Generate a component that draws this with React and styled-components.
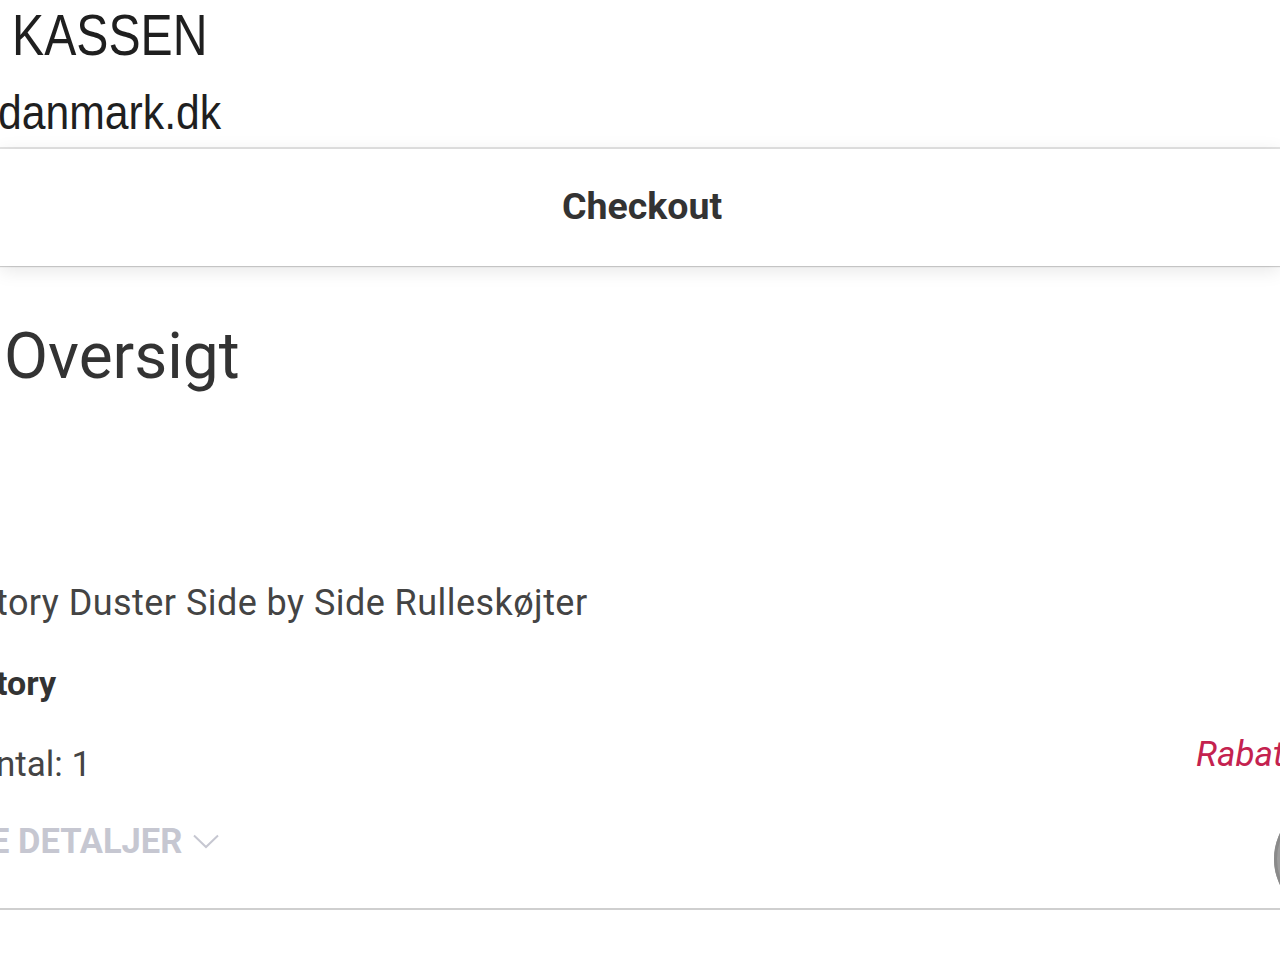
import React from "react";
import styled, { createGlobalStyle } from "styled-components";

const Global = createGlobalStyle`
  html, body { margin: 0; padding: 0; background: #fff; }
  body { overflow: hidden; width: 1280px; height: 960px; }
  #root { width: 1280px; min-height: 960px; overflow: hidden; }
`;

const Page = styled.div`
  display: flex;
  flex-direction: column;
  width: 1280px;
  overflow: hidden;
  font-family: Roboto, "Noto Sans", sans-serif;
`;

const TopBar = styled.div`
  display: flex;
  flex-direction: column;
  padding: 1px 0 6px 12px;
  border-bottom: 2px solid #e3e3e3;
  font-family: "Liberation Sans", Arial, sans-serif;
  color: #1f1f1f;
`;

const StoreTitle = styled.div`
  font-size: 57px;
  line-height: 68px;
  transform: scaleX(0.845);
  transform-origin: left center;
  white-space: nowrap;
`;

const StoreDomain = styled.div`
  margin: 16px 0 0 -14px;
  font-size: 48px;
  line-height: 56px;
  transform: scaleX(0.89);
  transform-origin: left center;
  white-space: nowrap;
`;

const Header = styled.header`
  position: relative;
  z-index: 1;
  height: 117px;
  display: flex;
  align-items: center;
  justify-content: center;
  padding-bottom: 4px;
  box-sizing: border-box;
  background: #fff;
  box-shadow: 0 1px 1px rgba(0, 0, 0, 0.18), 0 4px 18px rgba(0, 0, 0, 0.1);
`;

const HeaderTitle = styled.h1`
  margin: 0 0 0 4px;
  font-size: 37.5px;
  font-weight: 700;
  color: #333;
  line-height: 42px;
`;

const Overview = styled.section`
  display: flex;
  flex-direction: column;
  padding: 53px 0 0 4px;
`;

const OverviewTitle = styled.h2`
  margin: 0;
  font-size: 64px;
  font-weight: 400;
  line-height: 76px;
  color: #333;
`;

const ItemRow = styled.div`
  display: flex;
  justify-content: space-between;
  align-items: flex-start;
  margin: 188px -112px 0 -4px;
  padding-bottom: 47px;
  border-bottom: 2px solid #cfcfcf;
`;

const ItemInfo = styled.div`
  display: flex;
  flex-direction: column;
  margin-left: -4px;
`;

const ItemLine = styled.div`
  font-size: ${(p) => p.$size || 34}px;
  font-weight: ${(p) => (p.$bold ? 700 : 400)};
  letter-spacing: ${(p) => p.$spacing || 0}px;
  line-height: 40px;
  color: ${(p) => p.$color || "#444"};
  margin-top: ${(p) => p.$gap || 0}px;
  white-space: nowrap;
`;

const DetailsToggle = styled.button`
  display: flex;
  align-items: center;
  gap: 11px;
  margin: 36px 0 0 -6px;
  padding: 0;
  border: 0;
  background: none;
  font-family: Roboto, "Noto Sans", sans-serif;
  font-size: 34.5px;
  font-weight: 700;
  line-height: 40px;
  color: #c6c7d1;
  text-transform: uppercase;
  cursor: pointer;
`;

const PriceCol = styled.div`
  display: flex;
  flex-direction: column;
  width: 196px;
  margin-bottom: -57px;
`;

const Discount = styled.div`
  margin-top: 152px;
  font-size: 35px;
  font-style: italic;
  line-height: 40px;
  color: #c4224f;
  white-space: nowrap;
`;

const QtyCircle = styled.div`
  align-self: flex-end;
  margin-top: 25px;
  width: 118px;
  height: 118px;
  border-radius: 50%;
  background: #9c9c9c;
  box-shadow: inset 0 0 0 3px #8a8a8a;
`;

const Chevron = () => (
  <svg width="26" height="15" viewBox="0 0 26 15" fill="none">
    <path d="M1 1.5 L13 13 L25 1.5" stroke="#c6c7d1" strokeWidth="2" />
  </svg>
);

export default function App() {
  return (
    <>
      <Global />
      <Page>
        <TopBar>
          <StoreTitle>KASSEN</StoreTitle>
          <StoreDomain>danmark.dk</StoreDomain>
        </TopBar>
        <Header>
          <HeaderTitle>Checkout</HeaderTitle>
        </Header>
        <Overview>
          <OverviewTitle>Oversigt</OverviewTitle>
          <ItemRow>
            <ItemInfo>
              <ItemLine $size={36} $spacing={0.45}>tory Duster Side by Side Rulleskøjter</ItemLine>
              <ItemLine $bold $color="#333" $gap={40}>tory</ItemLine>
              <ItemLine $size={35} $gap={42}>ntal: 1</ItemLine>
              <DetailsToggle>
                E DETALJER <Chevron />
              </DetailsToggle>
            </ItemInfo>
            <PriceCol>
              <Discount>Rabat -</Discount>
              <QtyCircle />
            </PriceCol>
          </ItemRow>
        </Overview>
      </Page>
    </>
  );
}
